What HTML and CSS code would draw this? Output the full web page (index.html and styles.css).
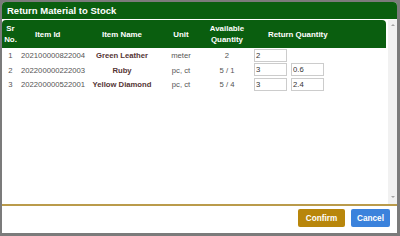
FILE: index.html
```html
<!DOCTYPE html>
<html lang="en">
<head>
    <meta charset="UTF-8">
    <meta name="viewport" content="width=device-width, initial-scale=1.0">
    <title>Return Material to Stock</title>
    <link rel="stylesheet" href="styles.css">
</head>
<body>
    <div class="dialog">
        <div class="dialog-header">Return Material to Stock</div>
        <div class="dialog-body">
            <div class="table-wrap">
                <table class="items">
                    <colgroup>
                        <col class="c-sr">
                        <col class="c-id">
                        <col class="c-name">
                        <col class="c-unit">
                        <col class="c-avail">
                        <col class="c-return">
                    </colgroup>
                    <thead>
                        <tr>
                            <th>Sr<br>No.</th>
                            <th class="th-id">Item Id</th>
                            <th>Item Name</th>
                            <th>Unit</th>
                            <th>Available<br>Quantity</th>
                            <th class="th-return">Return Quantity</th>
                        </tr>
                    </thead>
                    <tbody>
                        <tr>
                            <td class="center">1</td>
                            <td class="item-id">202100000822004</td>
                            <td class="item-name">Green Leather</td>
                            <td class="center">meter</td>
                            <td class="center">2</td>
                            <td class="qty"><input type="text" value="2"></td>
                        </tr>
                        <tr>
                            <td class="center">2</td>
                            <td class="item-id">202200000222003</td>
                            <td class="item-name">Ruby</td>
                            <td class="center">pc, ct</td>
                            <td class="center">5 / 1</td>
                            <td class="qty"><input type="text" value="3"><input type="text" value="0.6"></td>
                        </tr>
                        <tr>
                            <td class="center">3</td>
                            <td class="item-id">202200000522001</td>
                            <td class="item-name">Yellow Diamond</td>
                            <td class="center">pc, ct</td>
                            <td class="center">5 / 4</td>
                            <td class="qty"><input type="text" value="3"><input type="text" value="2.4"></td>
                        </tr>
                    </tbody>
                </table>
            </div>
            <div class="scrollbar">
                <span class="arrow-up"></span>
                <span class="arrow-down"></span>
            </div>
        </div>
        <div class="dialog-footer">
            <button class="btn btn-confirm">Confirm</button>
            <button class="btn btn-cancel">Cancel</button>
        </div>
    </div>
</body>
</html>
```

FILE: styles.css
```css
/* General Styles */
body {
    margin: 0;
    padding: 0;
    background-color: #7b7b7b;
    font-family: "Liberation Sans", Arial, sans-serif;
}
.dialog {
    margin: 2px 3px 3px 2px;
    width: 395px;
    height: 231px;
    background: white;
    border-radius: 4px 4px 0 0;
    display: flex;
    flex-direction: column;
    overflow: hidden;
}
.dialog-header {
    height: 17px;
    background-color: #0a5e0f;
    color: white;
    font-weight: bold;
    font-size: 9.5px;
    line-height: 18px;
    padding-left: 5px;
}
.dialog-body {
    margin-top: 1px;
    height: 184px;
    display: flex;
}
.table-wrap {
    flex: 1;
    padding-right: 2px;
}
.items {
    width: 384px;
    table-layout: fixed;
    border-collapse: collapse;
}
.c-sr { width: 17px; }
.c-id { width: 69px; }
.c-name { width: 68px; }
.c-unit { width: 50px; }
.c-avail { width: 42px; }
.c-return { width: 138px; }

.items thead th {
    background-color: #0a5e0f;
    color: white;
    font-size: 7.9px;
    font-weight: bold;
    line-height: 11px;
    height: 28px;
    padding: 0;
    text-align: center;
}
.items thead th:first-child {
    border-top-left-radius: 4px;
}
.items thead th:last-child {
    border-top-right-radius: 4px;
}
.items .th-id {
    text-align: left;
    padding-left: 16px;
}
.items .th-return {
    text-align: left;
    padding-left: 20px;
}
.items td {
    height: 13.5px;
    padding: 1px 0 0;
    font-size: 7.7px;
    color: #555;
    white-space: nowrap;
}
.items td.center {
    text-align: center;
}
.items td.item-id {
    padding-left: 2px;
}
.items td.item-name {
    text-align: center;
    font-weight: bold;
    font-size: 7.7px;
    color: #553535;
}
.items td.qty {
    padding: 0 0 0 6px;
    font-size: 0;
}
.qty input {
    width: 33px;
    height: 13px;
    box-sizing: border-box;
    margin: 0 4px 0 0;
    padding: 0 1px;
    border: 1px solid #ccc;
    font-family: inherit;
    font-size: 7.7px;
    color: #333;
    vertical-align: middle;
}
.scrollbar {
    width: 9px;
    background-color: #f1f1f1;
    display: flex;
    flex-direction: column;
    justify-content: space-between;
    align-items: center;
    padding: 4px 0 6px;
    box-sizing: border-box;
}
.arrow-up {
    width: 0;
    height: 0;
    border-left: 2px solid transparent;
    border-right: 2px solid transparent;
    border-bottom: 2px solid #a3a3a3;
}
.arrow-down {
    width: 0;
    height: 0;
    border-left: 2px solid transparent;
    border-right: 2px solid transparent;
    border-top: 2px solid #a3a3a3;
}
.dialog-footer {
    border-top: 2px solid #ba9b4b;
    flex: 1;
    display: flex;
    justify-content: flex-end;
    align-items: flex-start;
    gap: 6px;
    padding: 3px 7px 0 0;
}
.btn {
    height: 18px;
    border: none;
    border-radius: 2px;
    color: white;
    font-family: inherit;
    font-weight: bold;
    font-size: 8.2px;
    padding: 0;
    cursor: pointer;
}
.btn-confirm {
    width: 47px;
    background-color: #b8860b;
}
.btn-cancel {
    width: 39px;
    background-color: #3b82dc;
}
```
